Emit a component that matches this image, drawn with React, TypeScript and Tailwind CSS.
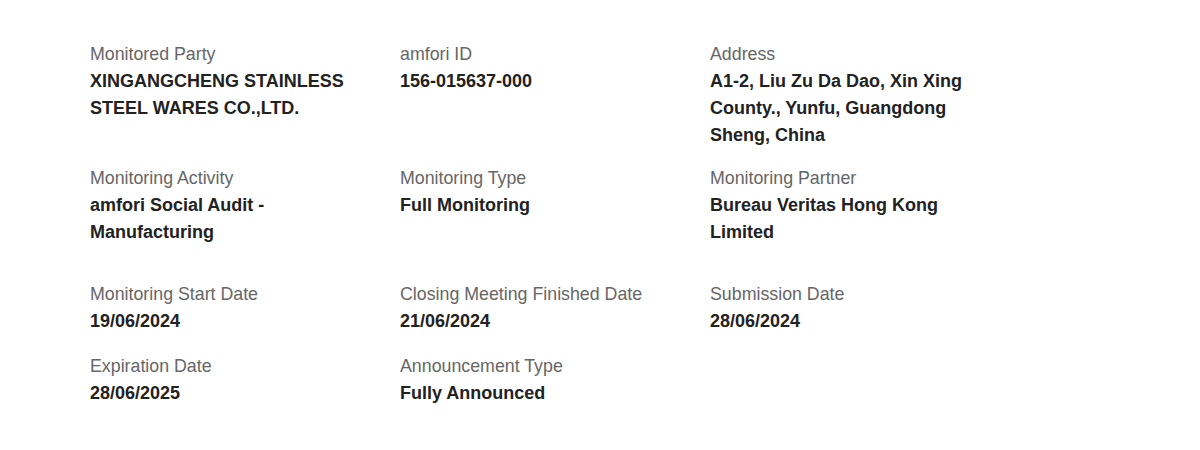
const rows: { label: string; value: string }[][] = [
  [
    { label: "Monitored Party", value: "XINGANGCHENG STAINLESS STEEL WARES CO.,LTD." },
    { label: "amfori ID", value: "156-015637-000" },
    { label: "Address", value: "A1-2, Liu Zu Da Dao, Xin Xing County., Yunfu, Guangdong Sheng, China" },
  ],
  [
    { label: "Monitoring Activity", value: "amfori Social Audit - Manufacturing" },
    { label: "Monitoring Type", value: "Full Monitoring" },
    { label: "Monitoring Partner", value: "Bureau Veritas Hong Kong Limited" },
  ],
  [
    { label: "Monitoring Start Date", value: "19/06/2024" },
    { label: "Closing Meeting Finished Date", value: "21/06/2024" },
    { label: "Submission Date", value: "28/06/2024" },
  ],
  [
    { label: "Expiration Date", value: "28/06/2025" },
    { label: "Announcement Type", value: "Fully Announced" },
  ],
]

const rowGaps = ["mt-0", "mt-[16px]", "mt-[35px]", "mt-[18px]"]

export default function App() {
  return (
    <div className="w-[1200px] h-[450px] bg-white pl-[90px] pt-[41px] font-['Liberation_Sans',Arial,sans-serif]">
      {rows.map((row, i) => (
        <div key={i} className={`grid grid-cols-[310px_310px_310px] ${rowGaps[i]}`}>
          {row.map((f) => (
            <div key={f.label} className="w-[274px]">
              <div className="text-[17.8px] leading-[26px] text-[#666]">{f.label}</div>
              <div className="pt-px text-[18px] leading-[27px] font-bold text-[#222]">{f.value}</div>
            </div>
          ))}
        </div>
      ))}
    </div>
  )
}
